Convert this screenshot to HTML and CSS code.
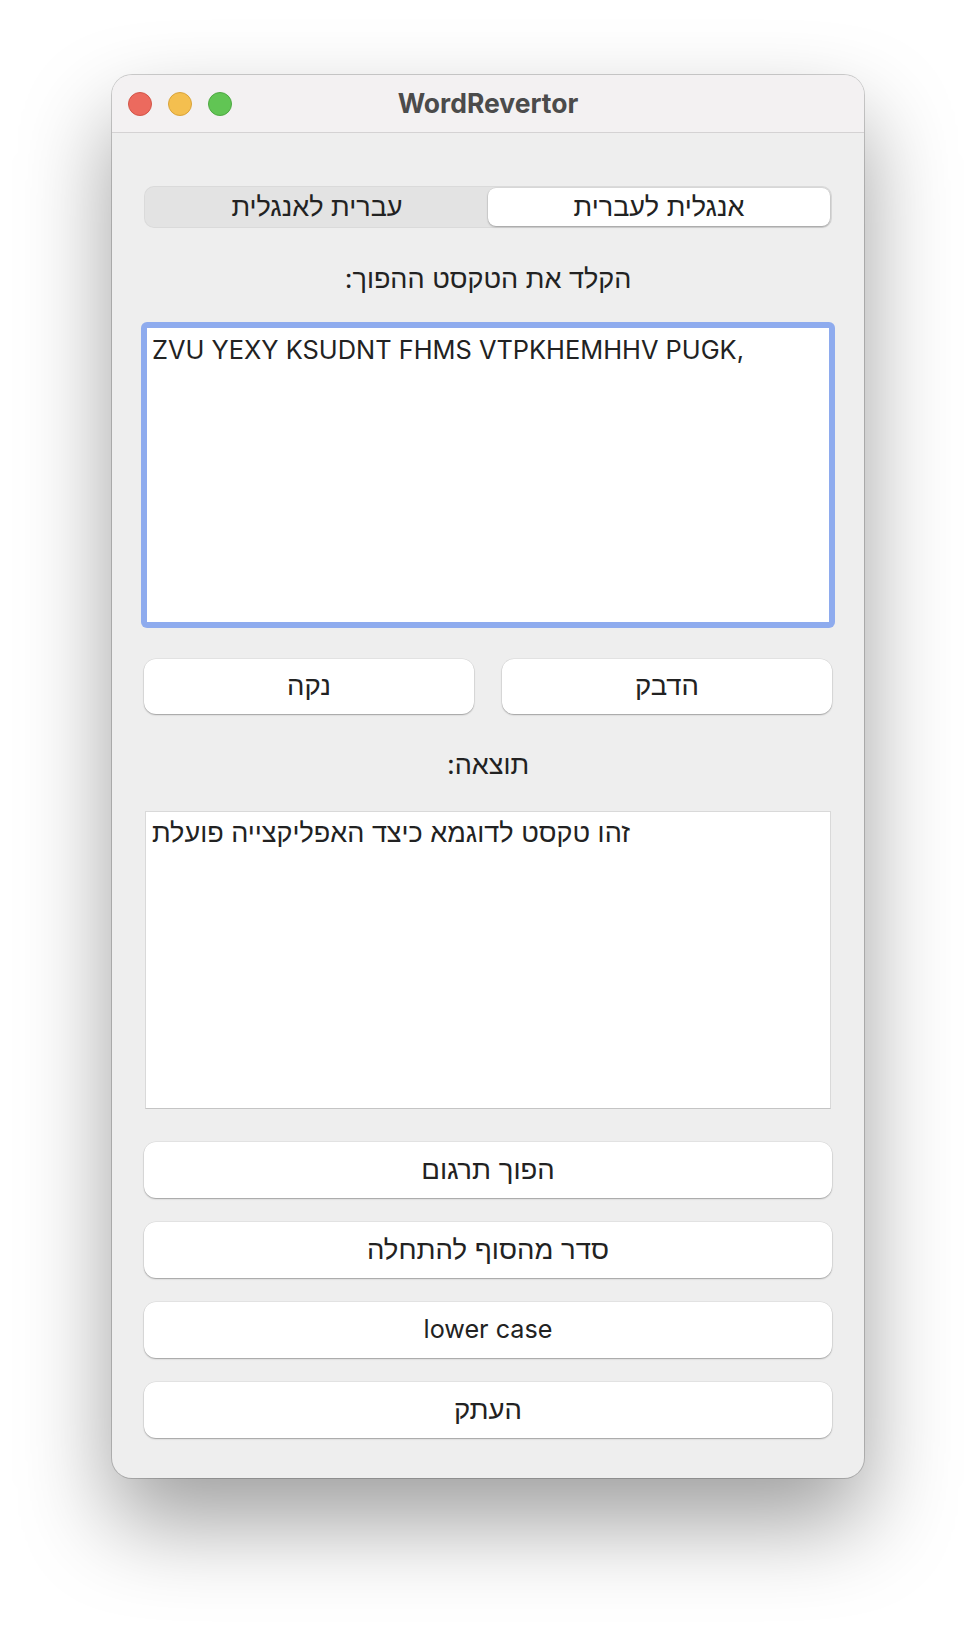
FILE: index.html
```html
<!DOCTYPE html>
<html lang="he">
<head>
  <meta charset="UTF-8" />
  <meta name="viewport" content="width=device-width, initial-scale=1.0"/>
  <title>WordRevertor</title>
  <link rel="stylesheet" href="styles.css">
</head>
<body>

  <div class="window">
    <div class="titlebar">
      <div class="lights">
        <span class="light red"></span>
        <span class="light yellow"></span>
        <span class="light green"></span>
      </div>
      <div class="title">WordRevertor</div>
    </div>

    <div class="content">
      <div class="segments" dir="rtl">
        <button class="segment selected">אנגלית לעברית</button>
        <button class="segment">עברית לאנגלית</button>
      </div>

      <div class="label" dir="rtl">הקלד את הטקסט ההפוך:</div>

      <textarea class="input-box" id="inputText" dir="ltr">ZVU YEXY KSUDNT FHMS VTPKHEMHHV PUGK,</textarea>

      <div class="button-row" dir="rtl">
        <button class="btn">הדבק</button>
        <button class="btn" onclick="clearText()">נקה</button>
      </div>

      <div class="label" dir="rtl">תוצאה:</div>

      <textarea class="output-box" id="outputText" dir="ltr" readonly>זהו טקסט לדוגמא כיצד האפליקצייה פועלת</textarea>

      <div class="actions">
        <button class="btn">הפוך תרגום</button>
        <button class="btn">סדר מהסוף להתחלה</button>
        <button class="btn latin">lower case</button>
        <button class="btn">העתק</button>
      </div>
    </div>
  </div>

  <script>
    function clearText() {
      document.getElementById('inputText').value = '';
      document.getElementById('outputText').value = '';
    }
  </script>

</body>
</html>
```

FILE: styles.css
```css
body {
  margin: 0;
  padding: 75px 0 0 112px;
  background: #ffffff;
  font-family: Inter, "Liberation Sans", "DejaVu Sans", sans-serif;
  color: #222222;
  width: 976px;
  height: 1626px;
  box-sizing: border-box;
  overflow: hidden;
}

.window {
  width: 752px;
  height: 1403px;
  border-radius: 20px;
  background: #eeeeee;
  box-shadow: 0 0 0 1px rgba(0, 0, 0, 0.18), 0 44px 90px rgba(0, 0, 0, 0.38);
  overflow: hidden;
}

.titlebar {
  position: relative;
  height: 57px;
  background: #f3f1f2;
  border-bottom: 1px solid #d4d2d3;
  display: flex;
  align-items: center;
  justify-content: center;
}

.lights {
  position: absolute;
  left: 16px;
  top: 17px;
  display: flex;
  gap: 16px;
}

.light {
  width: 24px;
  height: 24px;
  border-radius: 50%;
  box-sizing: border-box;
}
.red { background: #ec6a5e; border: 1px solid #d25548; }
.yellow { background: #f4bf4f; border: 1px solid #d9a33a; }
.green { background: #61c554; border: 1px solid #4ea843; }

.title {
  font-weight: 700;
  font-size: 26.5px;
  color: #4b4b4b;
  margin-top: -2px;
}

.content {
  padding: 53px 32px 40px 32px;
  display: flex;
  flex-direction: column;
}

.segments {
  display: flex;
  height: 42px;
  padding: 2px;
  box-sizing: border-box;
  background: #e3e3e3;
  border-radius: 10px;
  box-shadow: inset 0 0 0 1px rgba(0, 0, 0, 0.04);
}

.segment {
  flex: 1;
  border: none;
  background: transparent;
  font-family: inherit;
  font-size: 27px;
  color: #222222;
  border-radius: 8px;
  padding: 0 0 2px 0;
}

.segment.selected {
  background: #ffffff;
  box-shadow: 0 1px 2px rgba(0, 0, 0, 0.28), 0 0 0 0.5px rgba(0, 0, 0, 0.08);
}

.label {
  text-align: center;
  font-size: 27px;
  line-height: 32px;
  margin-top: 35px;
  margin-bottom: 30px;
}

.input-box,
.output-box {
  display: block;
  width: 100%;
  box-sizing: border-box;
  resize: none;
  font-family: inherit;
  line-height: 32px;
  color: #222222;
  background: #ffffff;
  text-align: left;
  outline: none;
  margin: 0;
}

.input-box {
  height: 300px;
  font-size: 25.4px;
  border: 3px solid #8eabee;
  border-radius: 3px;
  box-shadow: 0 0 0 3px #8eabee;
  padding: 6px 5px;
}

.output-box {
  height: 298px;
  width: 686px;
  margin-left: 1px;
  font-size: 27px;
  border: 1px solid #d9d9d9;
  border-bottom-color: #c4c4c4;
  border-radius: 0;
  padding: 5px 6px;
}

.button-row {
  display: flex;
  gap: 28px;
  margin-top: 34px;
}

.button-row .btn {
  flex: 1;
}

.btn {
  height: 55px;
  border: none;
  border-radius: 12px;
  background: #ffffff;
  font-family: inherit;
  font-size: 27.5px;
  color: #222222;
  box-shadow: 0 1px 1.5px rgba(0, 0, 0, 0.3), 0 0 0 0.5px rgba(0, 0, 0, 0.08);
  padding: 0 0 3px 0;
}

.btn.latin {
  font-size: 25.2px;
  padding-bottom: 2px;
}

.actions {
  display: flex;
  flex-direction: column;
  gap: 24px;
  margin-top: 33px;
}

.actions .btn {
  height: 56px;
}
```
